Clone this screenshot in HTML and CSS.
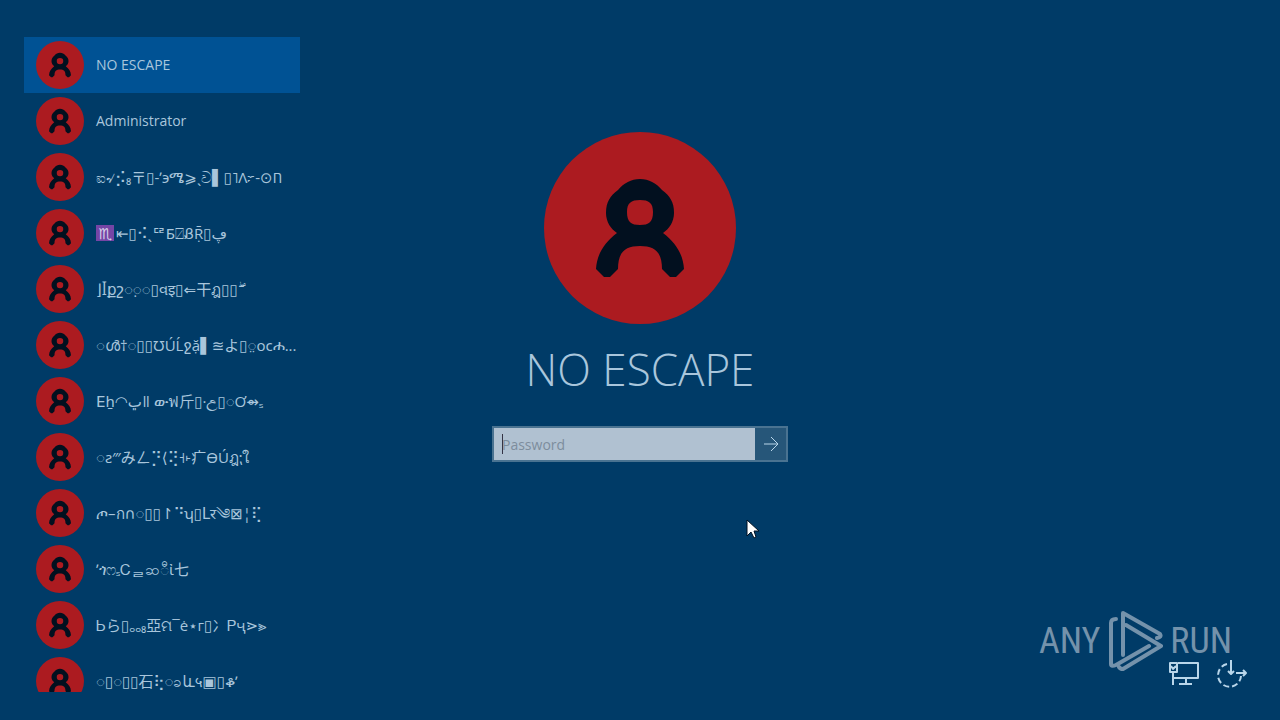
FILE: index.html
```
<!DOCTYPE html>
<html lang="en">
<head>
    <meta charset="UTF-8">
    <meta name="viewport" content="width=device-width, initial-scale=1.0">
    <title>Sign in</title>
    <link rel="stylesheet" href="styles.css">
</head>
<body>

    <!-- Shared avatar drawing -->
    <svg class="defs" aria-hidden="true">
        <symbol id="avatar" viewBox="0 0 192 192">
            <circle cx="96" cy="96" r="96" fill="#ac1b20"/>
            <path fill="#02101f" fill-rule="evenodd" d="M96 47C87 47 80 51 74 58C66 64 62 70 62 81C62 90 67 97 73 101C60 111 53 122 52 137L60 145H66L74 137C74 120 81 114 96 114C111 114 118 120 118 137L126 145H132L140 137C139 122 132 111 119 101C125 97 130 90 130 81C130 70 126 64 118 58C112 51 105 47 96 47ZM96 68C105 68 109 71 109 80C109 90 105 93 96 93C87 93 83 90 83 80C83 71 87 68 96 68Z"/>
        </symbol>
    </svg>

    <div class="screen">

        <!-- User list -->
        <nav class="users">
            <button class="user latin selected"><svg class="pic"><use href="#avatar"/></svg><span>NO ESCAPE</span></button>
            <button class="user latin"><svg class="pic"><use href="#avatar"/></svg><span>Administrator</span></button>
            <button class="user"><svg class="pic"><use href="#avatar"/></svg><span>ಐ৵⡪₈〒▯-ʹ϶ሜ⩾ˎව▌▯˥Ʌ፦-⊙ח</span></button>
            <button class="user"><svg class="pic"><use href="#avatar"/></svg><span><i class="sign">♏&#xFE0E;</i>⇤▯⠪ˎᄃᄅƂ⍁ᏰṜ▯ڥ</span></button>
            <button class="user"><svg class="pic"><use href="#avatar"/></svg><span>⌋ꟾքշ◌़◌▯વइ▯⇐干ฎ▯▯&#x06D6;</span></button>
            <button class="user"><svg class="pic"><use href="#avatar"/></svg><span>◌ൾ†◌▯▯ƱÚĹջặ▌≊よ▯◌̤оϲሐ...</span></button>
            <button class="user"><svg class="pic"><use href="#avatar"/></svg><span>ⴹẖ◠ڀǁ ውฟ斤▯·උ▯◌Ơ⇴ₛ</span></button>
            <button class="user"><svg class="pic"><use href="#avatar"/></svg><span>◌ƨ‴みㄥ⡙⟨⢝˧˫疒ƟÚฎ⁏ใ</span></button>
            <button class="user"><svg class="pic"><use href="#avatar"/></svg><span>ጦ–ก∩◌▯▯↾⠙ʮ▯Լर༄⊠¦⢏</span></button>
            <button class="user"><svg class="pic"><use href="#avatar"/></svg><span>ʹጎෆₛᏟᆯဆ◌ီἰ七</span></button>
            <button class="user"><svg class="pic"><use href="#avatar"/></svg><span>Ꮟら▯ₒₒ₈亞ମ¯ė⋆г▯冫Ꮲҷ⋗⪢</span></button>
            <button class="user"><svg class="pic"><use href="#avatar"/></svg><span>◌▯◌▯▯石⢗◌ခև५▣▯ቆʹ</span></button>
        </nav>

        <!-- Sign-in form -->
        <main class="login">
            <svg class="pic-large"><use href="#avatar"/></svg>
            <h1>NO ESCAPE</h1>
            <form class="password">
                <input type="password" placeholder="Password" aria-label="Password">
                <span class="caret"></span>
                <button type="button" aria-label="Submit">
                    <svg width="16" height="16" viewBox="0 0 16 16"><path d="M1 8H15M8 1L15 8L8 15"/></svg>
                </button>
            </form>
        </main>

        <!-- Network and ease of access -->
        <div class="tools">
            <div class="watermark">
                <span>ANY</span>
                <svg width="56" height="64" viewBox="0 0 56 64">
                    <path d="M9 10Q4 10 4 14V55Q4 58 9 56L42 37M16 46V4L53 25Q55 28 50 29M19 16L54 37L16 60Q13 60 12 58"/>
                </svg>
                <span>RUN</span>
            </div>
            <button aria-label="Network">
                <svg width="32" height="28" viewBox="0 0 32 28"><path d="M10 3H30V18H6M2 3H9V12H2ZM3 6L5 9L8 6M5 12V25M18 18V24M11 24H24"/></svg>
            </button>
            <button aria-label="Ease of access">
                <svg width="32" height="28" viewBox="0 0 32 28"><path stroke-dasharray="6 3" d="M11 4A11.500 11.500 0 1 0 25 16"/><path d="M15 0V14M12 11L15 14L18 11M20 13H30M27 10L30 13L27 16"/></svg>
            </button>
        </div>
    </div>

    <svg class="cursor" width="14" height="20" viewBox="0 0 14 20"><path d="M1 1V17L5 13L8 19L10 18L8 12H13Z" fill="#fff" stroke="#012"/></svg>

</body>
</html>
```
FILE: styles.css
```
* {
    box-sizing: border-box;
}

body {
    margin: 0;
    font-family: "Open Sans", "Noto Sans", "DejaVu Sans", "Noto Sans CJK JP", sans-serif;
    background-color: #003b67;
    color: #a9c6dc;
    overflow: hidden;
}

button {
    font: inherit;
    color: inherit;
    background: none;
    border: none;
    padding: 0;
}

.defs {
    position: absolute;
    width: 0;
    height: 0;
}

.screen {
    display: grid;
    grid-template-columns: 1fr 296px 1fr;
    height: 100vh;
}

/* User list */
.users {
    width: 276px;
    margin: 37px 0 28px 24px;
    overflow: hidden;
}

.user {
    display: flex;
    align-items: center;
    gap: 12px;
    width: 100%;
    height: 56px;
    padding: 0 12px;
    font-size: 15px;
    line-height: 20px;
    text-align: left;
    white-space: nowrap;
}

.user.latin {
    font-size: 14px;
}

.user.selected {
    background-color: #005294;
}

.pic {
    flex: none;
    width: 48px;
    height: 48px;
}

.sign {
    display: inline-block;
    width: 18px;
    margin-right: 2px;
    background-color: #7545a5;
    font-style: normal;
    text-align: center;
    line-height: 16px;
    color: #d5d0ea;
}

/* Sign-in form */
.login {
    padding-top: 132px;
}

.pic-large {
    display: block;
    width: 192px;
    height: 192px;
    margin: 0 auto;
}

h1 {
    margin: 15px 0 27px;
    font-size: 44px;
    font-weight: 300;
    line-height: 60px;
    text-align: center;
    white-space: nowrap;
}

.password {
    position: relative;
    display: flex;
    height: 36px;
    border: 2px solid #4a7391;
}

.password input {
    flex: 1;
    min-width: 0;
    padding: 0 8px;
    border: none;
    border-radius: 0;
    outline: none;
    background-color: #b0c1d1;
    font: inherit;
    font-size: 14px;
}

.password input::placeholder {
    color: #7d8d9d;
    opacity: 1;
}

.password button {
    width: 31px;
    background-color: #265679;
}

.caret {
    position: absolute;
    left: 8px;
    top: 6px;
    width: 1px;
    height: 20px;
    background-color: #334;
}

svg path {
    stroke-linejoin: round;
}

.password svg,
.tools svg {
    display: block;
    margin: 0 auto;
    fill: none;
    stroke: #b9d6ea;
    stroke-width: 2;
}

.password svg {
    stroke-width: 1;
}

/* Bottom right corner */
.tools {
    position: relative;
    display: flex;
    align-self: end;
    justify-content: flex-end;
    gap: 16px;
    padding: 0 32px 32px 0;
}

.watermark {
    position: absolute;
    right: 48px;
    bottom: 47px;
    display: flex;
    align-items: center;
    gap: 7px;
    font-family: "Roboto Condensed", "Liberation Sans Narrow", "Liberation Sans", sans-serif;
    font-size: 36px;
    color: #7492ab;
}

.tools .watermark svg {
    stroke: #7492ab;
    stroke-width: 4;
    stroke-linecap: round;
}

/* Mouse pointer */
.cursor {
    position: absolute;
    left: 746px;
    top: 519px;
}
```
